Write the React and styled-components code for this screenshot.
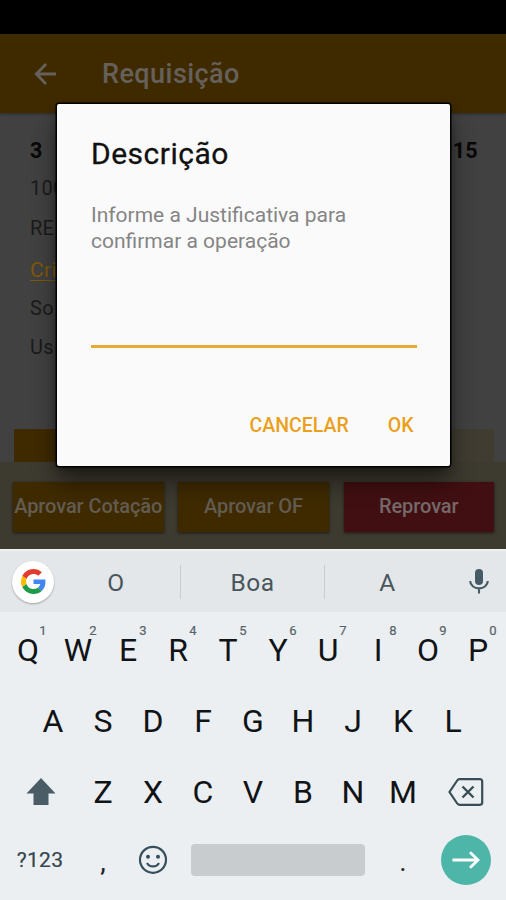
import React from "react";
import styled, { createGlobalStyle } from "styled-components";

const Global = createGlobalStyle`
  * { box-sizing: border-box; }
  html, body { margin: 0; padding: 0; background: #000; }
  body { font-family: Roboto, sans-serif; overflow: hidden; }
  button { font: inherit; border: 0; padding: 0; background: none; }
  svg { display: block; }
`;

const Screen = styled.div`
  position: relative;
  width: 506px;
  height: 900px;
  overflow: hidden;
  display: flex;
  flex-direction: column;
  background: #414141;
`;

const StatusBar = styled.div`
  height: 34px;
  flex: none;
  background: #000;
`;

const AppBar = styled.header`
  height: 79px;
  flex: none;
  display: flex;
  align-items: center;
  gap: 45px;
  padding: 1px 0 0 34px;
  background: linear-gradient(#3d2d05 0, #3f2a00 10px, #3f2a00 100%);
  color: #65615a;
  box-shadow: 0 1px 3px rgba(0, 0, 0, 0.35);
`;

const BarTitle = styled.h1`
  margin: 0;
  font-size: 27px;
  line-height: 32px;
  font-weight: 500;
  letter-spacing: 0.45px;
`;

const Content = styled.main`
  height: 349px;
  flex: none;
  display: flex;
  flex-direction: column;
  padding: 19px 12px 0 14px;
`;

const Line = styled.div`
  display: flex;
  justify-content: space-between;
  height: ${(p) => p.$h}px;
  padding: 0 16px 0 16px;
  align-items: center;
  font-size: ${(p) => p.$size || 20}px;
  letter-spacing: 0.3px;
  font-weight: ${(p) => (p.$bold ? 700 : 400)};
  color: ${(p) => (p.$bold ? "#080808" : "#1b1b1b")};
`;

const Link = styled.a`
  color: #805708;
  text-decoration: underline;
  text-decoration-thickness: 1px;
  text-underline-offset: 3px;
`;

const Tabs = styled.div`
  display: flex;
  height: 33px;
  margin-top: auto;
  background: #413c32;
`;

const ActiveTab = styled.div`
  width: 240px;
  background: #3f2a00;
`;

const Actions = styled.footer`
  height: 87px;
  flex: none;
  display: grid;
  grid-template-columns: repeat(3, 150.5px);
  justify-content: space-between;
  padding: 20px 12px 17px 13px;
  background: #3d3a30;
`;

const Action = styled.button`
  background: ${(p) => (p.$danger ? "#410f11" : "#3f2a00")};
  color: ${(p) => (p.$danger ? "#75696a" : "#625c51")};
  font-size: 20px;
  font-weight: 500;
  letter-spacing: -0.08px;
  line-height: 24px;
  padding-bottom: 3px;
  white-space: nowrap;
  box-shadow: 0 1px 3px rgba(0, 0, 0, 0.55);
`;

const Dialog = styled.section`
  position: absolute;
  left: 57px;
  top: 104px;
  width: 393px;
  height: 362px;
  display: flex;
  flex-direction: column;
  padding: 32px 33px 0 34px;
  background: #fafafa;
  border-radius: 2px;
  box-shadow: 0 0 0 1.5px #000, 0 16px 24px rgba(0, 0, 0, 0.48), 0 3px 10px rgba(0, 0, 0, 0.3);
`;

const DialogTitle = styled.h2`
  margin: 0;
  font-size: 30px;
  line-height: 36px;
  font-weight: 400;
  letter-spacing: 0.5px;
  color: #111;
  -webkit-text-stroke: 0.3px #111;
`;

const Message = styled.p`
  margin: 31px 0 0;
  font-size: 21px;
  line-height: 25.5px;
  color: #858585;
`;

const Input = styled.div`
  height: 94px;
  border-bottom: 3px solid #e6ab35;
`;

const DialogActions = styled.div`
  display: flex;
  justify-content: flex-end;
  gap: 39px;
  padding: 65px 3.5px 0 0;
`;

const TextButton = styled.button`
  font-size: 19.5px;
  line-height: 26px;
  font-weight: 500;
  color: #eaa01c;
`;

const Keyboard = styled.div`
  flex: 1;
  display: flex;
  flex-direction: column;
  background: #eceff1;
  border-top: 2px solid #f0eff0;
`;

const Suggestions = styled.div`
  height: 61px;
  flex: none;
  display: grid;
  grid-template-columns: 52px 129px 144px 125px 1fr;
  align-items: center;
  background: #e4e7e9;
  color: #48565c;
`;

const GoogleBadge = styled.div`
  width: 42px;
  height: 42px;
  margin-left: 12px;
  border-radius: 50%;
  background: #fff;
  display: grid;
  place-items: center;
  box-shadow: 0 1px 2px rgba(0, 0, 0, 0.3);
`;

const Suggestion = styled.div`
  height: 34px;
  line-height: 36px;
  font-size: 24.5px;
  letter-spacing: 0.5px;
  text-align: center;
  border-right: ${(p) => (p.$last ? "0" : "1.5px solid #c9cdd0")};
`;

const MicCell = styled.div`
  padding-left: 19px;
`;

const KeyRow = styled.div`
  height: ${(p) => p.$h}px;
  flex: none;
  display: grid;
  grid-template-columns: ${(p) => p.$cols};
  padding-left: ${(p) => p.$left || 0}px;
  align-items: center;
  justify-items: center;
`;

const Key = styled.div`
  position: relative;
  width: 50px;
  text-align: center;
  font-size: 32px;
  line-height: 40px;
  color: #101416;
`;

const OffsetKey = styled(Key)`
  margin-left: -8px;
`;

const DeleteCell = styled.div`
  margin-left: -9px;
`;

const Hint = styled.span`
  position: absolute;
  left: 32px;
  top: -7px;
  width: 16px;
  font-size: 13px;
  line-height: 16px;
  color: #56646a;
  -webkit-text-stroke: 0.2px #56646a;
`;

const SymbolKey = styled.div`
  font-size: 21px;
  letter-spacing: 0.3px;
  color: #33454d;
  -webkit-text-stroke: 0.2px #33454d;
`;

const Punct = styled.div`
  font-size: 28px;
  line-height: 32px;
  padding-top: 3px;
  color: #202628;
`;

const SpaceKey = styled.div`
  width: 174px;
  height: 32px;
  border-radius: 4px;
  background: #c8ccce;
`;

const EnterKey = styled.div`
  width: 50px;
  height: 50px;
  border-radius: 50%;
  background: #4db6a9;
  display: grid;
  place-items: center;
`;

const BackIcon = () => (
  <svg width="23" height="24" viewBox="0 0 23 24" fill="none" stroke="currentColor" strokeWidth="2.8">
    <path d="M22 12H3M12 2L2.3 12L12 22" />
  </svg>
);

const GoogleIcon = () => (
  <svg width="25" height="25" viewBox="0 0 48 48">
    <path fill="#e33b2e" d="M24 9.5c3.54 0 6.71 1.22 9.21 3.6l6.85-6.85C35.9 2.38 30.47 0 24 0 14.62 0 6.51 5.38 2.56 13.22l7.98 6.19C12.43 13.72 17.74 9.5 24 9.5z" />
    <path fill="#4285f4" d="M46.98 24.55c0-1.57-.15-3.09-.38-4.55H24v9.02h12.94c-.58 2.96-2.26 5.48-4.78 7.18l7.73 6c4.51-4.18 7.09-10.36 7.09-17.65z" />
    <path fill="#fbbc05" d="M10.53 28.59A14.5 14.5 0 0 1 9.77 24c0-1.6.27-3.14.76-4.59l-7.98-6.19A23.99 23.99 0 0 0 0 24c0 3.88.92 7.54 2.56 10.78l7.97-6.19z" />
    <path fill="#1e9a48" d="M24 48c6.48 0 11.93-2.13 15.89-5.81l-7.73-6c-2.15 1.45-4.92 2.3-8.16 2.3-6.26 0-11.57-4.22-13.47-9.91l-7.98 6.19C6.51 42.62 14.62 48 24 48z" />
  </svg>
);

const MicIcon = () => (
  <svg width="20" height="26" viewBox="0 0 20 26">
    <rect x="6" y="0" width="8" height="16" rx="4" fill="#455a64" />
    <path d="M1.2 12a8.8 7.4 0 0 0 17.6 0M10 19.5v5" fill="none" stroke="#455a64" strokeWidth="2.1" />
  </svg>
);

const ShiftIcon = () => (
  <svg width="30" height="29" viewBox="0 0 30 29">
    <path d="M15 0L29.5 15.500H22.500V27H7.500V15.500H0.500Z" fill="#4a5d66" />
  </svg>
);

const DeleteIcon = () => (
  <svg width="36" height="28" viewBox="0 0 36 28" fill="none" stroke="#3a4d56" strokeWidth="2.2">
    <path d="M11.5 1.2H32a2.2 2.2 0 0 1 2.2 2.2V24.6a2.2 2.2 0 0 1-2.2 2.2H11.5a3 3 0 0 1-2.3-1.3L1.5 14L9.2 2.5a3 3 0 0 1 2.3-1.3Z" />
    <path d="M14.5 8.5L25.5 19.5M25.5 8.5L14.5 19.5" strokeWidth="2.4" />
  </svg>
);

const SmileIcon = () => (
  <svg width="30" height="30" viewBox="0 0 30 30" fill="none" stroke="#35505c" strokeWidth="2.2">
    <circle cx="15" cy="14.8" r="13" />
    <circle cx="10" cy="11.8" r="2" fill="#35505c" stroke="none" />
    <circle cx="20" cy="11.8" r="2" fill="#35505c" stroke="none" />
    <path d="M9 18c2.5 4.6 9.5 4.6 12 0" />
  </svg>
);

const ArrowIcon = () => (
  <svg width="28" height="18" viewBox="0 0 28 18" fill="none" stroke="#fff" strokeWidth="2.8">
    <path d="M0.5 9H26M18 1.2L26 9L18 16.8" />
  </svg>
);

export default function App() {
  return (
    <>
      <Global />
      <Screen>
        <StatusBar />
        <AppBar>
          <BackIcon />
          <BarTitle>Requisição</BarTitle>
        </AppBar>
        <Content>
          <Line $h={37} $size={21.5} $bold>
            <span>3</span>
            <span>15</span>
          </Line>
          <Line $h={38}>100</Line>
          <Line $h={41}>RE</Line>
          <Line $h={43} $size={21}><Link>Cri</Link></Line>
          <Line $h={33}>So</Line>
          <Line $h={46}>Us</Line>
          <Tabs>
            <ActiveTab />
          </Tabs>
        </Content>
        <Actions>
          <Action>Aprovar Cotação</Action>
          <Action>Aprovar OF</Action>
          <Action $danger>Reprovar</Action>
        </Actions>
        <Keyboard>
          <Suggestions>
            <GoogleBadge><GoogleIcon /></GoogleBadge>
            <Suggestion>O</Suggestion>
            <Suggestion>Boa</Suggestion>
            <Suggestion $last>A</Suggestion>
            <MicCell><MicIcon /></MicCell>
          </Suggestions>
          <KeyRow $h={76} $cols="repeat(10, 50px)" $left={3}>
            {[..."QWERTYUIOP"].map((k, i) => (
              <Key key={k}>{k}<Hint>{(i + 1) % 10}</Hint></Key>
            ))}
          </KeyRow>
          <KeyRow $h={66} $cols="repeat(9, 50px)" $left={28}>
            {[..."ASDFGHJKL"].map((k) => <Key key={k}>{k}</Key>)}
          </KeyRow>
          <KeyRow $h={76} $cols="82px repeat(7, 50px) 76px">
            <ShiftIcon />
            {[..."ZXCVBNM"].map((k) => <OffsetKey key={k}>{k}</OffsetKey>)}
            <DeleteCell><DeleteIcon /></DeleteCell>
          </KeyRow>
          <KeyRow $h={60} $cols="80px 46px 53px 198px 52px 73px">
            <SymbolKey>?123</SymbolKey>
            <Punct>,</Punct>
            <SmileIcon />
            <SpaceKey />
            <Punct>.</Punct>
            <EnterKey><ArrowIcon /></EnterKey>
          </KeyRow>
        </Keyboard>
      </Screen>
      <Dialog>
        <DialogTitle>Descrição</DialogTitle>
        <Message>Informe a Justificativa para confirmar a operação</Message>
        <Input />
        <DialogActions>
          <TextButton>CANCELAR</TextButton>
          <TextButton>OK</TextButton>
        </DialogActions>
      </Dialog>
    </>
  );
}
